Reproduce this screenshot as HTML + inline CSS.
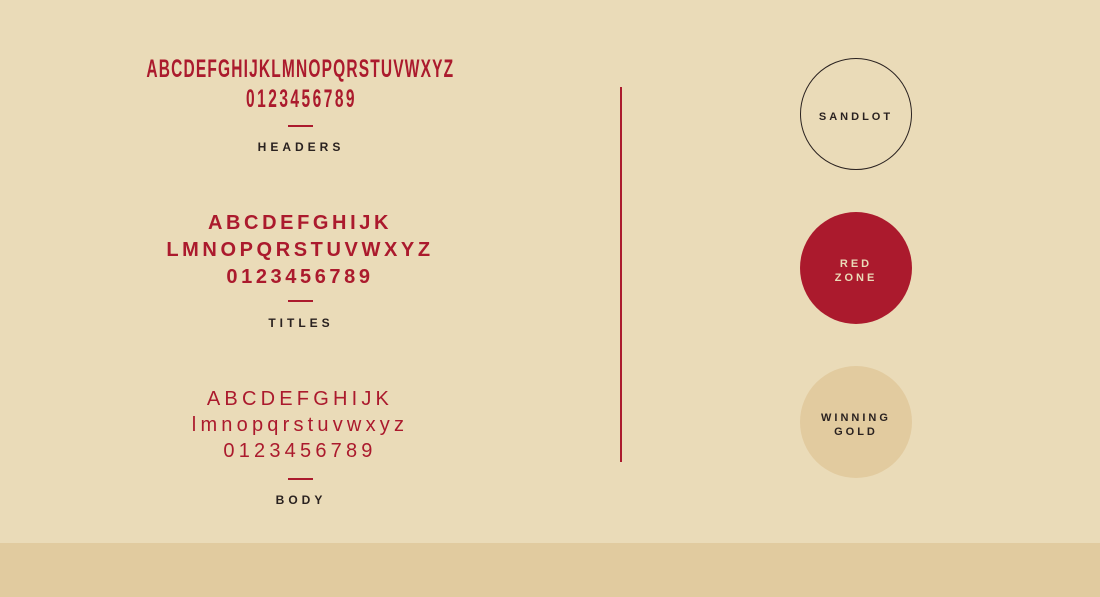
<!DOCTYPE html>
<html><head><style>
body{margin:0;width:1100px;height:597px;background:#eadbb8;position:relative;overflow:hidden;font-family:"Liberation Sans",sans-serif}
.t{position:absolute;left:0;width:600px;text-align:center;white-space:nowrap;color:#ab1a2d}
.h{font-size:25px;line-height:25px;font-weight:bold;display:inline-block}
.dash{position:absolute;left:288px;width:25px;height:2px;background:#ab1a2d}
.lab{position:absolute;left:0;width:602px;text-align:center;font-size:12px;font-weight:bold;letter-spacing:4px;color:#2a2220}
.c{position:absolute;left:800px;width:112px;height:112px;border-radius:50%;box-sizing:border-box;display:flex;align-items:center;justify-content:center;text-align:center;font-size:11px;font-weight:bold;letter-spacing:3px;line-height:14px;padding-top:5px}
</style></head><body>
<div class="t" style="top:57px"><span class="h" style="transform:scaleX(0.62);letter-spacing:1.9px">ABCDEFGHIJKLMNOPQRSTUVWXYZ</span></div>
<div class="t" style="top:87px;left:2px"><span class="h" style="transform:scaleX(0.62);letter-spacing:4px">0123456789</span></div>
<div class="dash" style="top:125px"></div>
<div class="lab" style="top:140px">HEADERS</div>

<div class="t" style="top:210px;font-size:20px;font-weight:bold;letter-spacing:3.6px;line-height:27px">ABCDEFGHIJK<br>LMNOPQRSTUVWXYZ<br>0123456789</div>
<div class="dash" style="top:300px"></div>
<div class="lab" style="top:316px">TITLES</div>

<div class="t" style="top:386px;font-size:20px;letter-spacing:4.2px;line-height:26px">ABCDEFGHIJK<br>lmnopqrstuvwxyz<br>0123456789</div>
<div class="dash" style="top:478px"></div>
<div class="lab" style="top:493px">BODY</div>

<div style="position:absolute;left:620px;top:87px;width:2px;height:375px;background:#ab1a2d"></div>

<div class="c" style="top:58px;border:1px solid #2a2220;color:#2a2220">SANDLOT</div>
<div class="c" style="top:212px;background:#ab1a2d;color:#eadbb8">RED<br>ZONE</div>
<div class="c" style="top:366px;background:#e2cb9f;color:#2a2220">WINNING<br>GOLD</div>

<div style="position:absolute;left:0;top:543px;width:1100px;height:54px;background:#e1cb9f"></div>
</body></html>
